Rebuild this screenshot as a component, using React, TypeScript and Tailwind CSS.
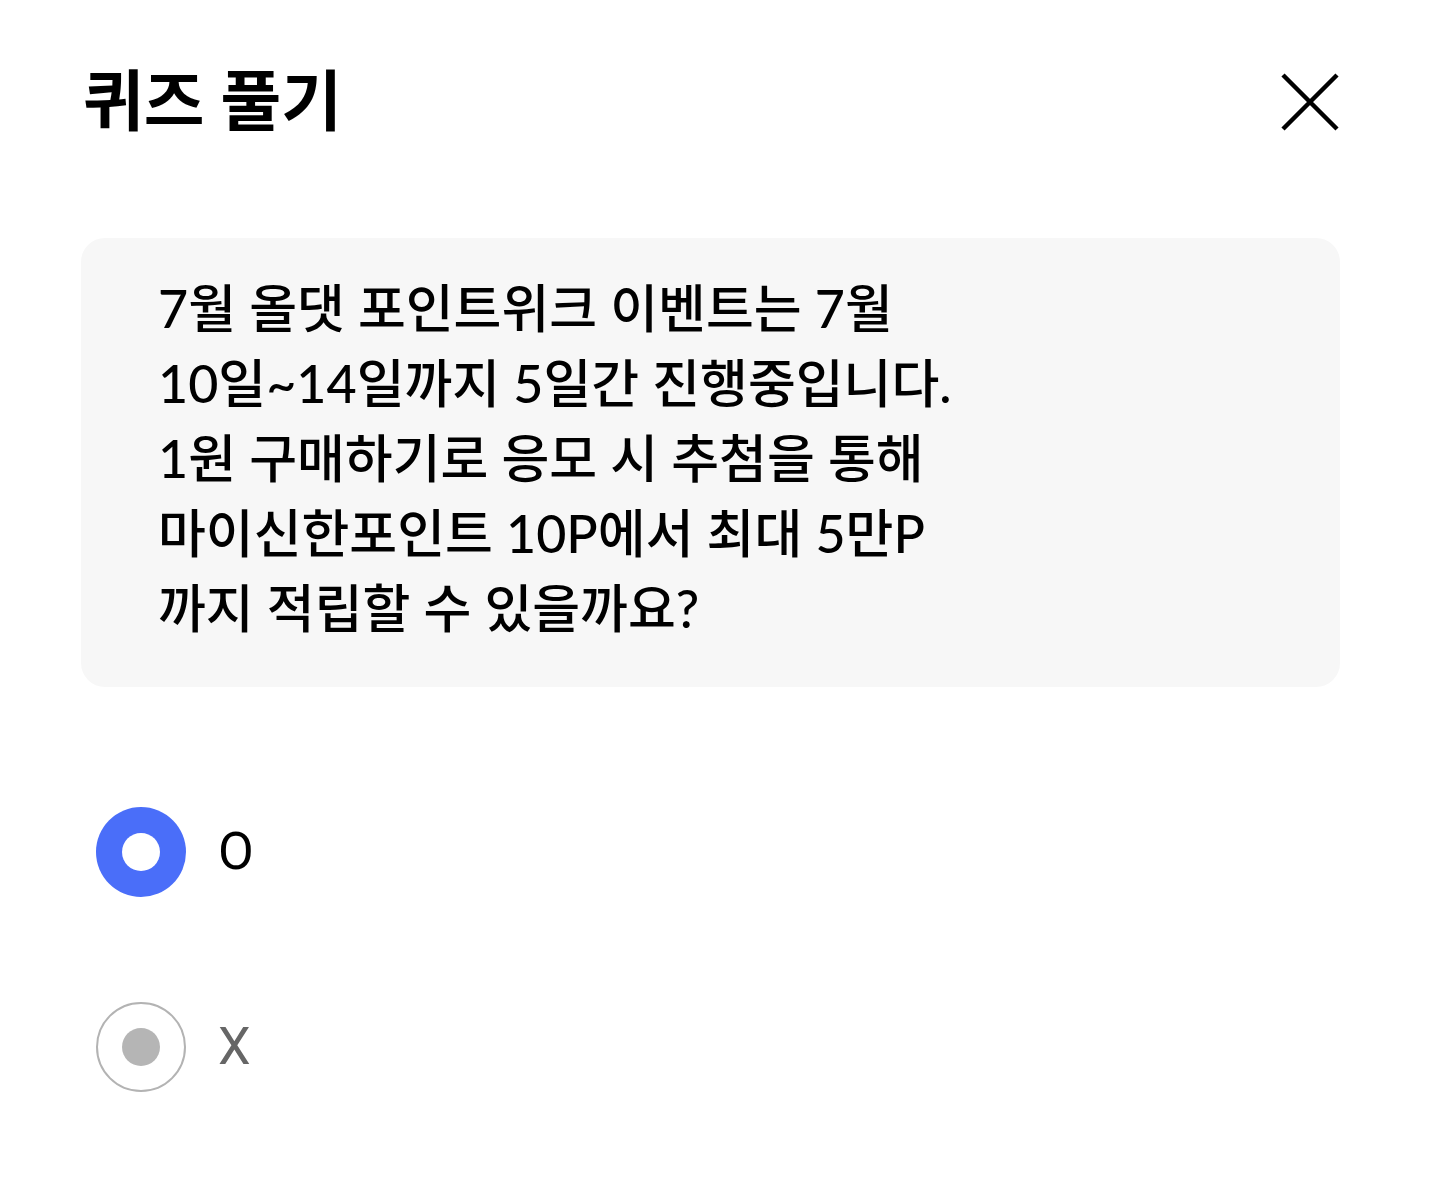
import { useState } from "react";

const font = { fontFamily: '"Lato", "Noto Sans CJK KR", sans-serif' };
const labelFont = { fontFamily: '"Roboto", "Noto Sans CJK KR", sans-serif' };

function Radio({ checked }: { checked: boolean }) {
  if (checked) {
    return (
      <span className="flex h-[90px] w-[90px] items-center justify-center rounded-full bg-[#4a6ef9]">
        <span className="h-[38px] w-[38px] rounded-full bg-white" />
      </span>
    );
  }
  return (
    <span className="flex h-[90px] w-[90px] items-center justify-center rounded-full border-[2.5px] border-[#b3b3b3] bg-white">
      <span className="h-[38px] w-[38px] rounded-full bg-[#b5b5b5]" />
    </span>
  );
}

export default function App() {
  const [answer, setAnswer] = useState<"O" | "X">("O");

  return (
    <div className="min-h-[1183px] w-[1431px] bg-white text-black" style={font}>
      <div className="flex items-center justify-between pl-[83px] pr-[92px] pt-[62px]">
        <h1 className="text-[66px] font-bold leading-[76px]">퀴즈 풀기</h1>
        <button className="mt-[4px]" aria-label="닫기">
          <svg width="58" height="58" viewBox="0 0 58 58" fill="none" stroke="#000" strokeWidth="4.5">
            <path d="M2 2 L56 56 M56 2 L2 56" />
          </svg>
        </button>
      </div>

      <div className="ml-[81px] mr-[91px] mt-[100px] rounded-[24px] bg-[#f7f7f7] pb-[41px] pl-[77px] pr-[40px] pt-[33px]">
        <p className="text-[52px] font-medium leading-[75px]">
          7월 올댓 포인트위크 이벤트는 7월
          <br />
          10일~14일까지 5일간 진행중입니다.
          <br />
          1원 구매하기로 응모 시 추첨을 통해
          <br />
          마이신한포인트 10P에서 최대 5만P
          <br />
          까지 적립할 수 있을까요?
        </p>
      </div>

      <div className="mt-[120px] flex flex-col gap-[105px] pl-[96px]">
        <label className="flex cursor-pointer items-center gap-[32px]" onClick={() => setAnswer("O")}>
          <Radio checked={answer === "O"} />
          <span style={labelFont} className={`text-[52px] leading-none ${answer === "O" ? "text-black" : "text-[#666]"}`}>O</span>
        </label>
        <label className="flex cursor-pointer items-center gap-[32px]" onClick={() => setAnswer("X")}>
          <Radio checked={answer === "X"} />
          <span style={labelFont} className={`text-[52px] leading-none ${answer === "X" ? "text-black" : "text-[#666]"}`}>X</span>
        </label>
      </div>
    </div>
  );
}
